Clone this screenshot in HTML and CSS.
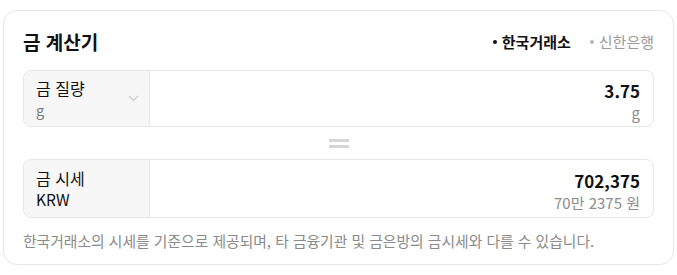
FILE: index.html
```html
<!DOCTYPE html>
<html lang="ko">
<head>
<meta charset="utf-8">
<title>금 계산기</title>
<link rel="stylesheet" href="styles.css">
</head>
<body>
<div class="card">
  <div class="header">
    <h1 class="title">금 계산기</h1>
    <div class="sources">
      <span class="source active">한국거래소</span>
      <span class="source">신한은행</span>
    </div>
  </div>
  <div class="box box-weight">
    <div class="unit">
      <div class="unit-text">
        <div class="unit-name">금 질량</div>
        <div class="unit-sub">g</div>
      </div>
      <svg class="chevron" width="11" height="7" viewBox="0 0 11 7"><path d="M1 1l4.5 4.5L10 1" fill="none" stroke="#c9c9c9" stroke-width="1.2"/></svg>
    </div>
    <div class="value">
      <div class="value-main">3.75</div>
      <div class="value-sub">g</div>
    </div>
  </div>
  <div class="equals"><span class="bar"></span><span class="bar"></span></div>
  <div class="box box-price">
    <div class="unit">
      <div class="unit-text">
        <div class="unit-name">금 시세</div>
        <div class="unit-code">KRW</div>
      </div>
    </div>
    <div class="value">
      <div class="value-main">702,375</div>
      <div class="value-sub">70만 2375 원</div>
    </div>
  </div>
  <p class="note">한국거래소의 시세를 기준으로 제공되며, 타 금융기관 및 금은방의 금시세와 다를 수 있습니다.</p>
</div>
</body>
</html>
```
FILE: styles.css
```css
html, body {
  margin: 0;
  padding: 0;
  background: #ffffff;
}
body {
  font-family: "Noto Sans CJK KR", "Noto Sans", sans-serif;
  color: #111111;
}
.card {
  margin: 10px 3px 0 3px;
  height: 255px;
  box-sizing: border-box;
  border: 1px solid #e6e6e6;
  border-radius: 14px;
  padding: 19px 19px 0 19px;
}
.header {
  display: flex;
  align-items: center;
  justify-content: space-between;
  height: 24px;
  margin-bottom: 16px;
}
.title {
  margin: 0;
  font-size: 19px;
  font-weight: 700;
  line-height: 24px;
  color: #111111;
}
.sources {
  display: flex;
  gap: 19px;
  margin-right: 0;
}
.source {
  font-size: 15px;
  line-height: 22px;
  color: #9a9a9a;
  display: flex;
  align-items: center;
}
.source::before {
  content: "";
  width: 4px;
  height: 4px;
  border-radius: 50%;
  background: #b5b5b5;
  margin-right: 5px;
}
.source.active {
  color: #111111;
  font-weight: 700;
}
.source.active::before {
  background: #111111;
}
.box {
  display: grid;
  grid-template-columns: 126px 1fr;
  border: 1px solid #e6e6e6;
  border-radius: 8px;
  overflow: hidden;
  box-sizing: border-box;
}
.box-weight {
  height: 57px;
}
.box-price {
  height: 59px;
}
.unit {
  background: #f7f7f7;
  border-right: 1px solid #e6e6e6;
  display: flex;
  align-items: center;
  justify-content: space-between;
  padding: 0 10px 0 12px;
}
.unit-name {
  font-size: 16px;
  line-height: 22px;
  color: #111111;
}
.unit-code {
  font-size: 15.5px;
  line-height: 21px;
  color: #111111;
}
.unit-sub {
  font-size: 14.5px;
  line-height: 21px;
  color: #777777;
}
.chevron {
  display: block;
}
.value {
  display: flex;
  flex-direction: column;
  align-items: flex-end;
  justify-content: center;
  padding: 4px 13px 0 0;
}
.value-main {
  font-size: 17px;
  font-weight: 700;
  line-height: 23px;
  color: #111111;
}
.value-sub {
  font-size: 15px;
  line-height: 21px;
  color: #8c8c8c;
}
.equals {
  height: 32px;
  display: flex;
  flex-direction: column;
  align-items: center;
  justify-content: center;
  gap: 3px;
}
.bar {
  display: block;
  width: 20px;
  height: 3px;
  background: #d6d6d6;
}
.note {
  margin: 14px 0 0 0;
  font-size: 14.8px;
  line-height: 18px;
  color: #8a8a8a;
}
```
